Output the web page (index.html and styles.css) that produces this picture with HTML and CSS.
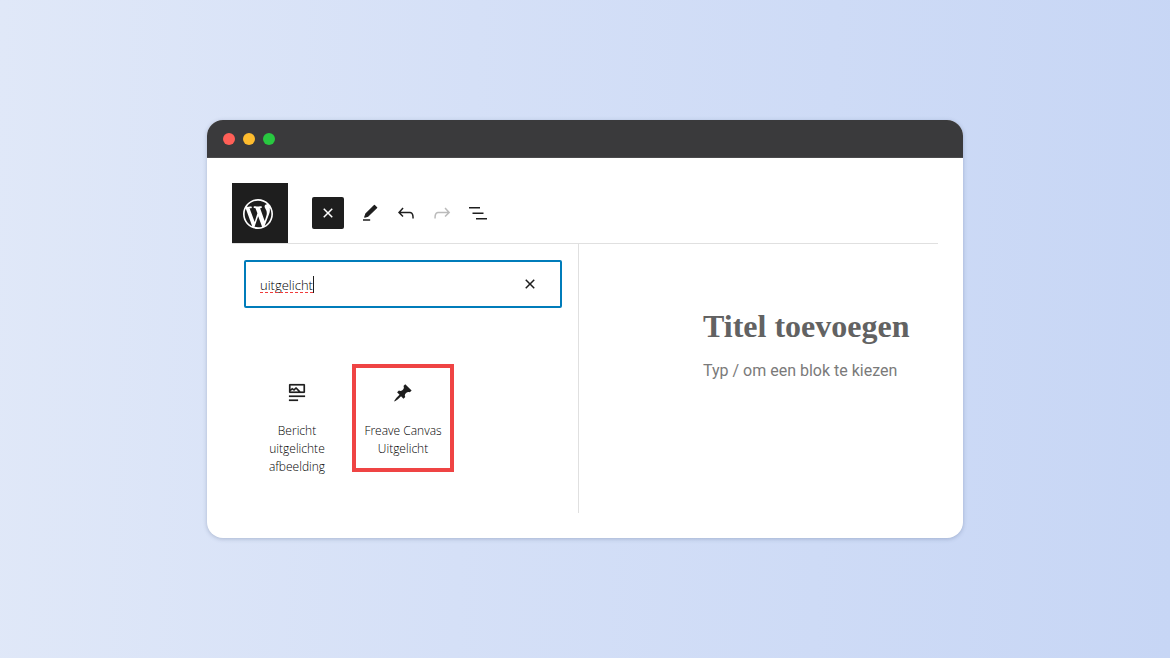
FILE: index.html
```html
<!DOCTYPE html>
<html lang="nl">
<head>
<meta charset="utf-8">
<meta name="viewport" content="width=device-width, initial-scale=1">
<title>Titel toevoegen</title>
<link rel="stylesheet" href="styles.css">
</head>
<body>
<main class="window">
  <div class="titlebar">
    <span class="dot dot-close"></span>
    <span class="dot dot-minimize"></span>
    <span class="dot dot-zoom"></span>
  </div>
  <div class="editor">
    <header class="toolbar">
      <a class="site-link" href="#" aria-label="WordPress">
        <svg width="30" height="30" viewBox="0 0 20 20" fill="currentColor" aria-hidden="true"><path d="M20 10c0-5.51-4.49-10-10-10C4.48 0 0 4.49 0 10c0 5.52 4.48 10 10 10 5.51 0 10-4.48 10-10zM7.78 15.37L4.37 6.22c.55-.02 1.17-.08 1.17-.08.5-.06.44-1.13-.06-1.11 0 0-1.45.11-2.37.11-.18 0-.37 0-.58-.01C4.12 2.69 6.87 1.11 10 1.11c2.33 0 4.45.87 6.05 2.34-.68-.11-1.65.39-1.65 1.58 0 .74.45 1.36.9 2.1.35.61.55 1.36.55 2.46 0 1.49-1.4 5-1.4 5l-3.03-8.37c.54-.02.82-.17.82-.17.5-.05.44-1.25-.06-1.22 0 0-1.44.12-2.38.12-.87 0-2.33-.12-2.33-.12-.5-.03-.56 1.2-.06 1.22l.92.08 1.26 3.41zM17.41 10c.24-.64.74-1.87.43-4.25.7 1.29 1.05 2.71 1.05 4.25 0 3.29-1.73 6.24-4.4 7.78.97-2.59 1.94-5.2 2.92-7.78zM6.1 18.09C3.12 16.65 1.11 13.53 1.11 10c0-1.3.23-2.48.72-3.59C3.25 10.3 4.67 14.2 6.1 18.09zm4.03-6.63l2.58 6.98c-.86.29-1.76.45-2.71.45-.79 0-1.57-.11-2.29-.33.81-2.38 1.62-4.74 2.42-7.1z"/></svg>
      </a>
      <div class="tools">
        <button class="tool tool-inserter" type="button" aria-label="Blok-inserter sluiten">
          <svg width="24" height="24" viewBox="0 0 24 24" fill="currentColor" aria-hidden="true"><path d="M12 13.06l3.712 3.713 1.061-1.06L13.061 12l3.712-3.712-1.06-1.06L12 10.938 8.288 7.227l-1.061 1.06L10.939 12l-3.712 3.712 1.06 1.061L12 13.061z"/></svg>
        </button>
        <button class="tool" type="button" aria-label="Gereedschap">
          <svg width="20" height="20" viewBox="0 0 24 24" fill="currentColor" aria-hidden="true"><path d="M20.100 5.600L17.300 2.800 7 13l-1.300 3.900 3.900-1.200L20.100 5.600z" stroke="currentColor" stroke-width="1.400" stroke-linejoin="round"/><path d="M3.600 19.400h8.600v2H3.600z"/></svg>
        </button>
        <button class="tool" type="button" aria-label="Ongedaan maken">
          <svg width="24" height="24" viewBox="0 0 24 24" fill="currentColor" aria-hidden="true"><path d="M18.3 11.7c-.6-.6-1.4-.9-2.3-.9H6.7l2.9-3.3-1.1-1-4.5 5L8.5 16l1-1-2.7-2.7H16c.5 0 .9.2 1.3.5 1 1 1 3.4 1 4.5v.3h1.5v-.2c0-1.5 0-4.3-1.5-5.7z"/></svg>
        </button>
        <button class="tool" type="button" aria-label="Opnieuw" disabled>
          <svg width="24" height="24" viewBox="0 0 24 24" fill="currentColor" aria-hidden="true"><path d="M15.6 6.5l-1.1 1 2.9 3.3H8c-.9 0-1.7.3-2.3.9-1.4 1.5-1.4 4.2-1.4 5.6v.2h1.5v-.3c0-1.1 0-3.5 1-4.5.3-.3.7-.5 1.3-.5h9.2L14.5 15l1.1 1.1 4.6-4.6-4.6-5z"/></svg>
        </button>
        <button class="tool" type="button" aria-label="Lijstweergave">
          <svg width="24" height="24" viewBox="0 0 24 24" fill="currentColor" aria-hidden="true"><path d="M3 6h11v1.5H3V6Zm3.500 5.500h11V13h-11v-1.500ZM21 17H10v1.500h11V17Z"/></svg>
        </button>
      </div>
    </header>
    <div class="body">
      <section class="inserter">
        <div class="search">
          <input class="search-input" type="text" value="uitgelicht" aria-label="Zoeken" spellcheck="false">
          <span class="typing" aria-hidden="true"></span>
          <button class="search-clear" type="button" aria-label="Zoekopdracht resetten">
            <svg width="24" height="24" viewBox="0 0 24 24" fill="currentColor" aria-hidden="true"><path d="M12 13.06l3.712 3.713 1.061-1.06L13.061 12l3.712-3.712-1.06-1.06L12 10.938 8.288 7.227l-1.061 1.06L10.939 12l-3.712 3.712 1.06 1.061L12 13.061z"/></svg>
          </button>
        </div>
        <div class="blocks">
          <button class="block" type="button">
            <span class="block-icon"><svg width="24" height="24" viewBox="0 0 24 24" fill="currentColor" aria-hidden="true"><path d="M19 3H5c-.6 0-1 .4-1 1v7c0 .5.4 1 1 1h14c.5 0 1-.4 1-1V4c0-.6-.4-1-1-1zM5.500 10.500v-.4l1.800-1.300 1.300.8c.3.2.7.2.9-.1L11 8.100l2.400 2.400H5.500zm13 0h-2.900l-4-4c-.3-.3-.8-.3-1.100 0L8.900 8l-1.200-.8c-.3-.2-.6-.2-.9 0l-1.300 1V4.500h13v6zM4 20h9v-1.500H4V20zm0-4h16v-1.500H4V16z" stroke="currentColor" stroke-width=".2"/></svg></span>
            <span>Bericht uitgelichte afbeelding</span>
          </button>
          <button class="block block-highlight" type="button">
            <span class="block-icon"><svg width="20" height="20" viewBox="0 0 20 20" fill="currentColor" aria-hidden="true"><path d="M10.440 3.020l1.820-1.820 6.360 6.350-1.830 1.820c-1.050-.68-2.480-.57-3.410.36l-.75.75c-.92.93-1.040 2.350-.35 3.410l-1.830 1.820-2.410-2.410-2.800 2.790c-.42.42-3.380 2.710-3.800 2.290s1.860-3.390 2.280-3.810l2.790-2.790L4.100 9.360l1.830-1.820c1.050.69 2.480.57 3.400-.36l.75-.75c.93-.92 1.050-2.350.36-3.410z"/></svg></span>
            <span>Freave Canvas Uitgelicht</span>
          </button>
        </div>
      </section>
      <article class="canvas">
        <h1 class="post-title">Titel toevoegen</h1>
        <p class="post-prompt">Typ / om een blok te kiezen</p>
      </article>
    </div>
  </div>
</main>
</body>
</html>
```

FILE: styles.css
```css
*, *::before, *::after { box-sizing: border-box; }

body {
  margin: 0;
  min-height: 100vh;
  display: flex;
  align-items: center;
  justify-content: center;
  padding: 24px;
  background: linear-gradient(92deg, #e0e8f8 0%, #d5e0f7 40%, #c7d6f5 100%);
  color: #000;
  font-family: "Open Sans", "Noto Sans", sans-serif;
  font-size: 12px;
  font-weight: 300;
}

button {
  margin: 0;
  padding: 0;
  border: 0;
  background: none;
  color: #1e1e1e;
  font: inherit;
}

svg { display: block; }

.window {
  width: 100%;
  max-width: 756px;
  border-radius: 16px;
  overflow: hidden;
  background: #fff;
  box-shadow: 0 1px 4px rgba(60, 80, 120, 0.3);
}

.titlebar {
  display: flex;
  align-items: center;
  gap: 8px;
  height: 38px;
  padding: 0 16px;
  background: #3a3a3c;
  border-bottom: 1px solid #4a4a4c;
}

.dot { width: 12px; height: 12px; border-radius: 50%; }
.dot-close { background: #ff5f57; }
.dot-minimize { background: #febc2e; }
.dot-zoom { background: #28c840; }

.editor { padding: 25px; }

.toolbar {
  display: flex;
  align-items: center;
  gap: 24px;
  border-bottom: 1px solid #e0e0e0;
}

.site-link {
  display: flex;
  align-items: center;
  justify-content: center;
  width: 56px;
  height: 60px;
  padding: 2px 4px 0 0;
  background: #1e1e1e;
  color: #fff;
}

.tools { display: flex; align-items: center; gap: 4px; }

.tool {
  display: flex;
  align-items: center;
  justify-content: center;
  width: 32px;
  height: 32px;
}

.tool:disabled { color: #bbb; }

.tool-inserter {
  margin-right: 6px;
  border-radius: 2px;
  background: #1e1e1e;
  color: #fff;
}

.body { display: flex; min-height: 269px; }

.inserter {
  flex: 0 0 347px;
  padding: 16px 16px 0 12px;
  border-right: 1px solid #e0e0e0;
}

.search { position: relative; }

.search-input {
  display: block;
  width: 100%;
  height: 48px;
  padding: 2px 48px 0 14px;
  border: 2px solid #007cba;
  border-radius: 2px;
  outline: 0;
  background: #fff;
  color: #000;
  font: 300 13px "Open Sans", "Noto Sans", sans-serif;
}

.typing {
  position: absolute;
  top: 16px;
  left: 16px;
  width: 54px;
  height: 17px;
  border-right: 1px solid #1e1e1e;
  background: repeating-linear-gradient(90deg, #f03c3c 0 3px, transparent 3px 5px) bottom / 100% 1px no-repeat;
}

.search-clear {
  position: absolute;
  top: 12px;
  right: 20px;
}

.blocks {
  display: grid;
  grid-template-columns: repeat(3, 1fr);
  align-items: start;
  justify-items: center;
  margin-top: 56px;
}

.block {
  display: flex;
  flex-direction: column;
  align-items: center;
  width: 102px;
  gap: 17px;
  padding: 13px 4px 10px;
  border: 4px solid transparent;
  color: #000;
  line-height: 18px;
  text-align: center;
}

.block-highlight { border-color: #ef4444; }

.block-icon {
  display: flex;
  align-items: center;
  justify-content: center;
  height: 24px;
  color: #1e1e1e;
}

.canvas { flex: 1; padding: 63px 0 0 124px; }

.post-title {
  margin: 0;
  color: #626262;
  font: bold 32px/38px "Liberation Serif", serif;
  white-space: nowrap;
}

.post-prompt {
  margin: 16px 0 0;
  color: #7a7a7a;
  font: 400 16px/20px Roboto, sans-serif;
  white-space: nowrap;
}
```
